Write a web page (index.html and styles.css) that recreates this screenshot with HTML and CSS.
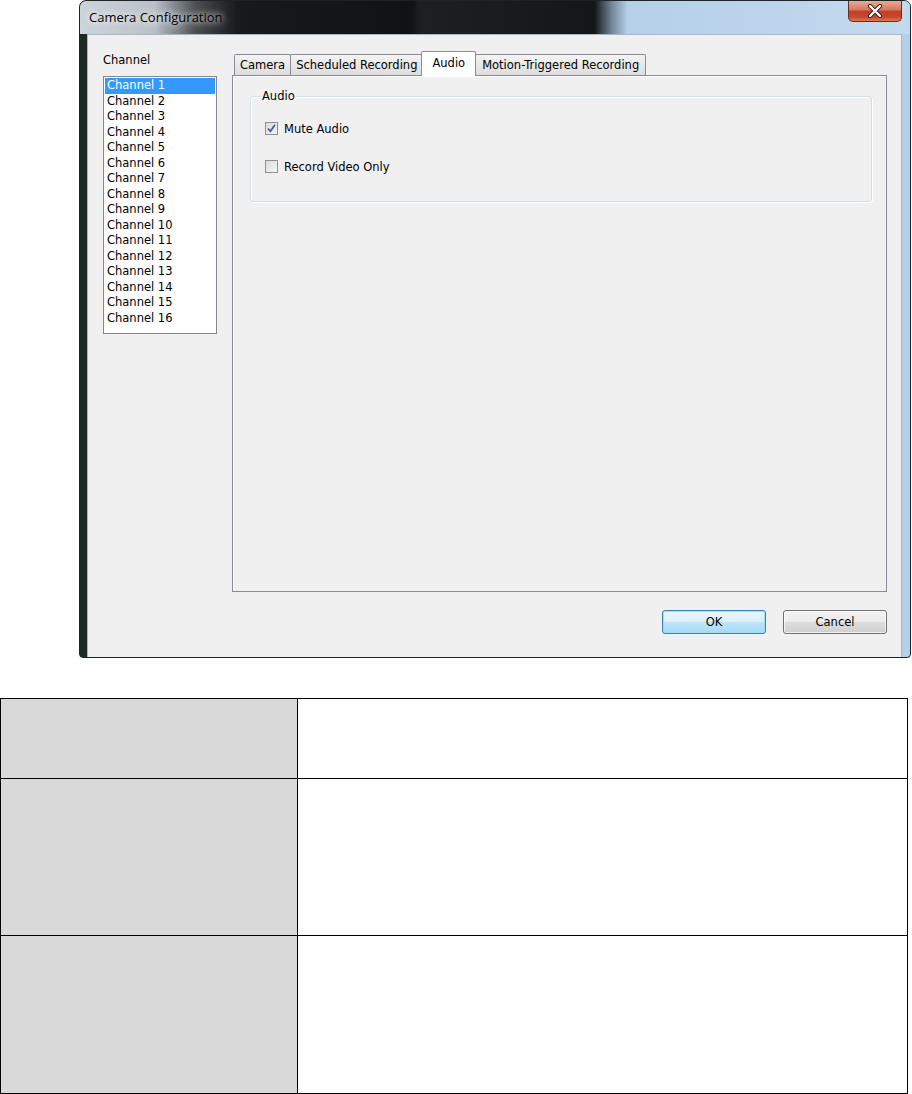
FILE: index.html
```html
<!DOCTYPE html>
<html>
<head>
<meta charset="utf-8">
<title>Camera Configuration</title>
<link rel="stylesheet" href="styles.css">
</head>
<body>

<div class="window">
  <div class="titlebar">
    <span class="title">Camera Configuration</span>
    <span class="close">
      <svg width="16" height="14" viewBox="0 0 16 14">
        <path d="M3 2 L13 12 M13 2 L3 12" stroke="#3a1a14" stroke-width="4.2" stroke-linecap="round"/>
        <path d="M3 2 L13 12 M13 2 L3 12" stroke="#fff" stroke-width="2.4" stroke-linecap="round"/>
      </svg>
    </span>
  </div>

  <div class="client">
    <div class="side">
      <div class="label">Channel</div>
      <div class="listbox">
        <div class="item selected">Channel 1</div>
        <div class="item">Channel 2</div>
        <div class="item">Channel 3</div>
        <div class="item">Channel 4</div>
        <div class="item">Channel 5</div>
        <div class="item">Channel 6</div>
        <div class="item">Channel 7</div>
        <div class="item">Channel 8</div>
        <div class="item">Channel 9</div>
        <div class="item">Channel 10</div>
        <div class="item">Channel 11</div>
        <div class="item">Channel 12</div>
        <div class="item">Channel 13</div>
        <div class="item">Channel 14</div>
        <div class="item">Channel 15</div>
        <div class="item">Channel 16</div>
      </div>
    </div>

    <div class="tabs">
      <div class="tabstrip">
        <div class="tab">Camera</div>
        <div class="tab">Scheduled Recording</div>
        <div class="tab active">Audio</div>
        <div class="tab">Motion-Triggered Recording</div>
      </div>
      <div class="panel">
        <fieldset class="group">
          <legend>Audio</legend>
          <label class="check">
            <span class="box">
              <svg width="13" height="13" viewBox="0 0 13 13">
                <path d="M3 6.5 L5.4 9.3 L10 2.8" fill="none" stroke="#3d5aa8" stroke-width="1.8"/>
              </svg>
            </span>
            Mute Audio
          </label>
          <label class="check">
            <span class="box"></span>
            Record Video Only
          </label>
        </fieldset>
      </div>
    </div>

    <div class="buttons">
      <div class="btn default">OK</div>
      <div class="btn">Cancel</div>
    </div>
  </div>
</div>

<table class="notes">
  <tr class="r1"><td class="key"></td><td class="val"></td></tr>
  <tr class="r2"><td class="key"></td><td class="val"></td></tr>
  <tr class="r3"><td class="key"></td><td class="val"></td></tr>
</table>

</body>
</html>
```

FILE: styles.css
```css
body { margin: 0; background: #fff; font-family: "DejaVu Sans", sans-serif; font-size: 11.5px; color: #000; }

/* ----- window frame ----- */
.window { margin-left: 79px; width: 830px; height: 656px; border: 1px solid #1d2426;
          border-radius: 7px 7px 4px 4px; overflow: hidden;
          background: linear-gradient(90deg, #1c2a24 0, #22362c 40%, #141618 64%, #9fbedc 70%, #b7cfe8 100%); }
.titlebar { height: 33px; display: flex; align-items: flex-start;
            background: linear-gradient(90deg, #cdd5dc 0, #b9c1c8 9%, #4a4e52 14%, #17191b 19%, #101214 40%,
                        #1d1f22 41%, #141618 62%, #6f8496 64%, #b6d0ea 66%, #c3d9ee 100%); }
.title { font-family: "Open Sans", sans-serif; font-size: 13px; margin: 7px 0 0 9px;
         text-shadow: 0 0 6px #fff, 0 0 10px rgba(255,255,255,.7); }
.close { margin-left: auto; margin-right: 8px; width: 52px; height: 20px; display: flex;
         align-items: center; justify-content: center; border: 1px solid #6b2a20; border-top: 0;
         border-radius: 0 0 5px 5px;
         background: linear-gradient(#e9a998 0, #d7785f 45%, #c2402a 50%, #c8472f 80%, #e07a50 100%); }

.client { margin: 0 8px 0 7px; height: 615px; border: 1px solid #a9b6c3; background: #f0f0f0;
          padding: 17px 14px 0 15px; display: grid; grid-template-columns: 114px 1fr;
          grid-template-rows: 541px auto; column-gap: 15px; }

/* ----- channel list ----- */
.label { height: 24px; line-height: 16px; }
.listbox { height: 254px; border: 1px solid #828790; background: #fff; padding: 1px; }
.item { height: 15.5px; line-height: 15.5px; padding-left: 2px; white-space: nowrap; }
.item.selected { background: #3399ff; color: #fff; }

/* ----- tab control ----- */
.tabstrip { display: flex; align-items: flex-end; height: 23px; padding-left: 2px; }
.tab { height: 20px; line-height: 20px; padding: 0 5px; border: 1px solid #898c95; border-bottom: 0;
       margin-right: -1px; border-radius: 2px 2px 0 0; white-space: nowrap;
       background: linear-gradient(#f4f4f4, #e6e6e6 60%, #dcdcdc); }
.tab:last-child { padding: 0 6px; }
.tab.active { height: 24px; background: #fff; margin: 0 -1px -1px -1px; padding: 0 10px;
              position: relative; z-index: 1; line-height: 22px; }
.panel { height: 502px; border: 1px solid #898c95; box-shadow: inset 1px 1px 0 #fff;
         background: #f0f0f0; padding: 13px 14px 0 17px; }

.group { margin: 0; height: 111px; border: 1px solid #d5dfe5; border-radius: 3px;
         box-shadow: inset 1px 1px 0 #fff, 1px 1px 0 #fff; padding: 0 0 0 14px; }
.group legend { padding: 0 1px; margin-left: -4px; line-height: 14px; }
.check { display: flex; align-items: center; gap: 6px; height: 15px; }
.check:first-of-type { margin-top: 18px; }
.check + .check { margin-top: 23px; }
.box { width: 11px; height: 11px; border: 1px solid #8e8f8f;
       background: linear-gradient(135deg, #dcdcdc, #f6f6f6); display: flex; }
.box svg { margin: -1px; }

/* ----- buttons ----- */
.buttons { grid-column: 1 / 3; display: flex; justify-content: flex-end; gap: 17px; padding-top: 17px; }
.btn { width: 102px; height: 22px; line-height: 22px; text-align: center; border: 1px solid #707070;
       border-radius: 3px;
       background: linear-gradient(#f2f2f2 0, #ebebeb 50%, #dddddd 51%, #cfcfcf 100%);
       box-shadow: inset 0 0 0 1px rgba(255,255,255,.7); }
.btn.default { border-color: #3c7fb1;
               background: linear-gradient(#eaf6fd 0, #d9f0fc 50%, #bee6fd 51%, #a7d9f5 100%);
               box-shadow: inset 0 0 0 1px #9fe0f7; }

/* ----- notes table ----- */
.notes { margin-top: 40px; width: 908px; border-collapse: collapse; }
.notes td { border: 1px solid #000; padding: 0; }
.notes .key { width: 296px; background: #d9d9d9; }
.notes .val { background: #fff; }
.notes .r1 td { height: 79px; }
.notes .r2 td { height: 156px; }
.notes .r3 td { height: 157px; }
```
